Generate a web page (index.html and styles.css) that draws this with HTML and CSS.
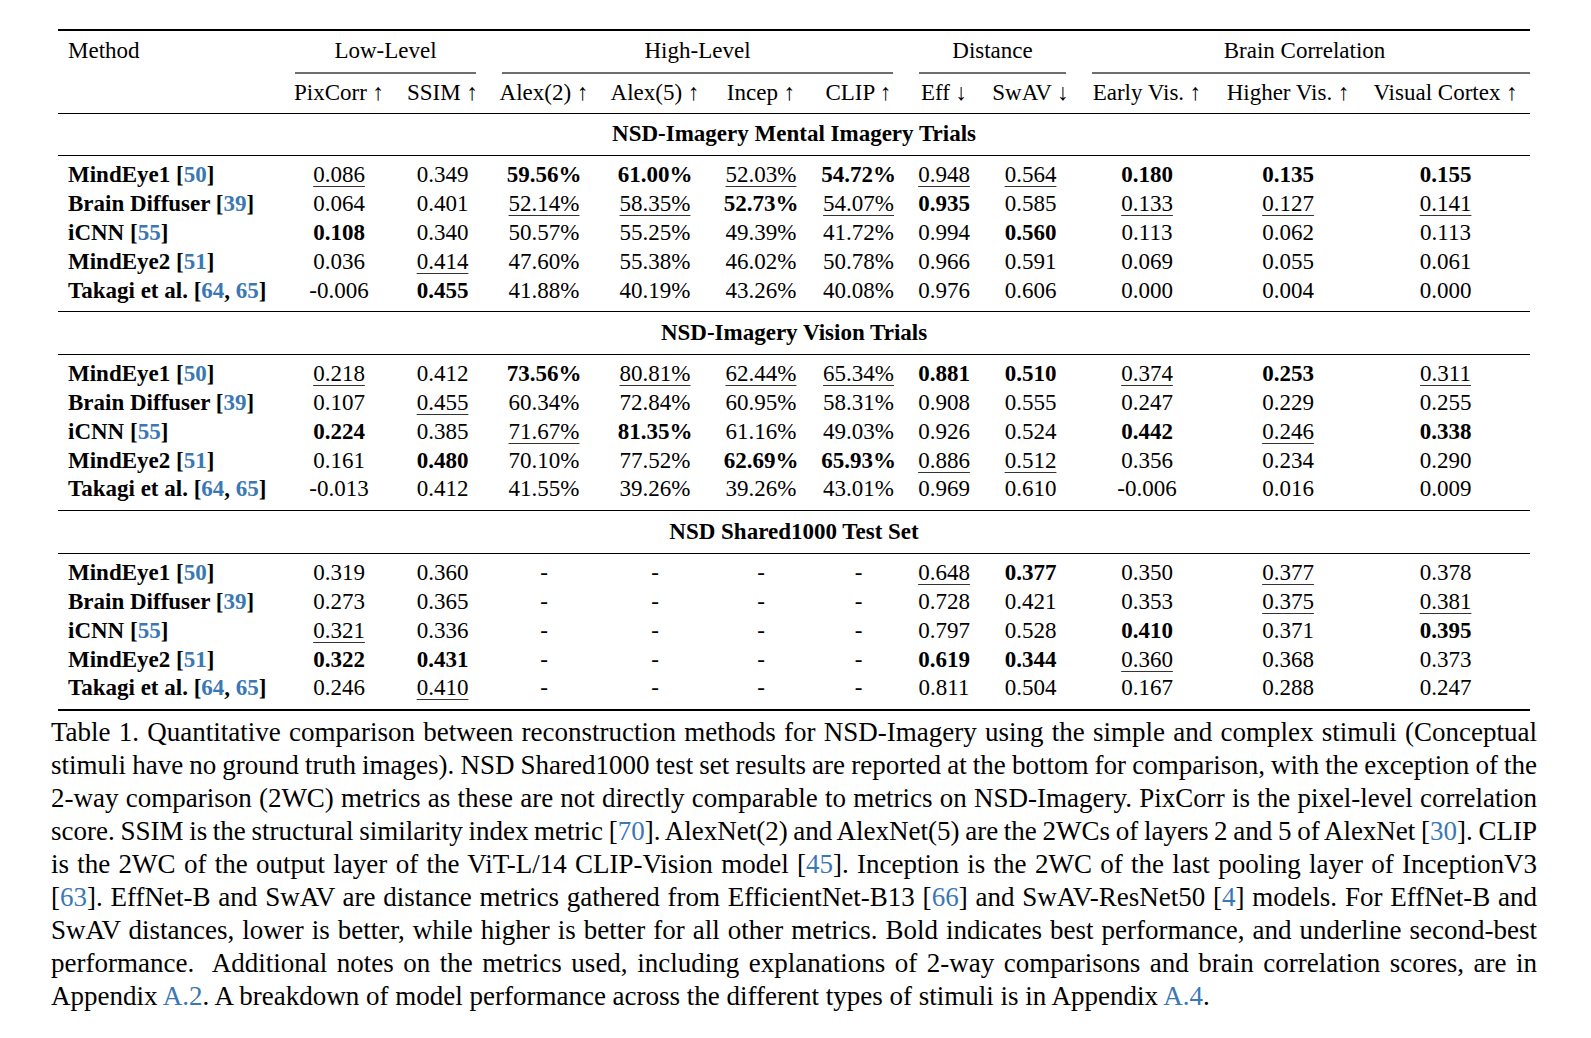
FILE: index.html
```html
<!DOCTYPE html>
<html>
<head>
<meta charset="utf-8">
<link rel="stylesheet" href="styles.css">
</head>
<body>
<div class="page">
<table class="results">
<colgroup>
<col class="c-method"><col class="c-pix"><col class="c-ssim"><col class="c-a2"><col class="c-a5"><col class="c-inc"><col class="c-clip"><col class="c-eff"><col class="c-swav"><col class="c-early"><col class="c-higher"><col class="c-vc">
</colgroup>
<thead>
<tr class="grp">
<th class="m-head">Method</th>
<th colspan="2"><div class="glabel">Low-Level</div><div class="cmid"></div></th>
<th colspan="4"><div class="glabel">High-Level</div><div class="cmid"></div></th>
<th colspan="2"><div class="glabel">Distance</div><div class="cmid"></div></th>
<th colspan="3"><div class="glabel">Brain Correlation</div><div class="cmid last"></div></th>
</tr>
<tr class="sub">
<th></th>
<th>PixCorr ↑</th><th>SSIM ↑</th><th>Alex(2) ↑</th><th>Alex(5) ↑</th><th>Incep ↑</th><th>CLIP ↑</th><th>Eff ↓</th><th>SwAV ↓</th><th>Early Vis. ↑</th><th>Higher Vis. ↑</th><th>Visual Cortex ↑</th>
</tr>
</thead>
<tbody>
<tr class="section"><td colspan="12">NSD-Imagery Mental Imagery Trials</td></tr>
<tr class="first"><td class="m">MindEye1 [<span class="cite">50</span>]</td><td><span class="ul">0.086</span></td><td>0.349</td><td class="b">59.56%</td><td class="b">61.00%</td><td><span class="ul">52.03%</span></td><td class="b">54.72%</td><td><span class="ul">0.948</span></td><td><span class="ul">0.564</span></td><td class="b">0.180</td><td class="b">0.135</td><td class="b">0.155</td></tr>
<tr><td class="m">Brain Diffuser [<span class="cite">39</span>]</td><td>0.064</td><td>0.401</td><td><span class="ul">52.14%</span></td><td><span class="ul">58.35%</span></td><td class="b">52.73%</td><td><span class="ul">54.07%</span></td><td class="b">0.935</td><td>0.585</td><td><span class="ul">0.133</span></td><td><span class="ul">0.127</span></td><td><span class="ul">0.141</span></td></tr>
<tr><td class="m">iCNN [<span class="cite">55</span>]</td><td class="b">0.108</td><td>0.340</td><td>50.57%</td><td>55.25%</td><td>49.39%</td><td>41.72%</td><td>0.994</td><td class="b">0.560</td><td>0.113</td><td>0.062</td><td>0.113</td></tr>
<tr><td class="m">MindEye2 [<span class="cite">51</span>]</td><td>0.036</td><td><span class="ul">0.414</span></td><td>47.60%</td><td>55.38%</td><td>46.02%</td><td>50.78%</td><td>0.966</td><td>0.591</td><td>0.069</td><td>0.055</td><td>0.061</td></tr>
<tr class="last"><td class="m">Takagi et al. [<span class="cite">64</span>, <span class="cite">65</span>]</td><td>-0.006</td><td class="b">0.455</td><td>41.88%</td><td>40.19%</td><td>43.26%</td><td>40.08%</td><td>0.976</td><td>0.606</td><td>0.000</td><td>0.004</td><td>0.000</td></tr>

<tr class="section"><td colspan="12">NSD-Imagery Vision Trials</td></tr>
<tr class="first"><td class="m">MindEye1 [<span class="cite">50</span>]</td><td><span class="ul">0.218</span></td><td>0.412</td><td class="b">73.56%</td><td><span class="ul">80.81%</span></td><td><span class="ul">62.44%</span></td><td><span class="ul">65.34%</span></td><td class="b">0.881</td><td class="b">0.510</td><td><span class="ul">0.374</span></td><td class="b">0.253</td><td><span class="ul">0.311</span></td></tr>
<tr><td class="m">Brain Diffuser [<span class="cite">39</span>]</td><td>0.107</td><td><span class="ul">0.455</span></td><td>60.34%</td><td>72.84%</td><td>60.95%</td><td>58.31%</td><td>0.908</td><td>0.555</td><td>0.247</td><td>0.229</td><td>0.255</td></tr>
<tr><td class="m">iCNN [<span class="cite">55</span>]</td><td class="b">0.224</td><td>0.385</td><td><span class="ul">71.67%</span></td><td class="b">81.35%</td><td>61.16%</td><td>49.03%</td><td>0.926</td><td>0.524</td><td class="b">0.442</td><td><span class="ul">0.246</span></td><td class="b">0.338</td></tr>
<tr><td class="m">MindEye2 [<span class="cite">51</span>]</td><td>0.161</td><td class="b">0.480</td><td>70.10%</td><td>77.52%</td><td class="b">62.69%</td><td class="b">65.93%</td><td><span class="ul">0.886</span></td><td><span class="ul">0.512</span></td><td>0.356</td><td>0.234</td><td>0.290</td></tr>
<tr class="last"><td class="m">Takagi et al. [<span class="cite">64</span>, <span class="cite">65</span>]</td><td>-0.013</td><td>0.412</td><td>41.55%</td><td>39.26%</td><td>39.26%</td><td>43.01%</td><td>0.969</td><td>0.610</td><td>-0.006</td><td>0.016</td><td>0.009</td></tr>

<tr class="section"><td colspan="12">NSD Shared1000 Test Set</td></tr>
<tr class="first"><td class="m">MindEye1 [<span class="cite">50</span>]</td><td>0.319</td><td>0.360</td><td>-</td><td>-</td><td>-</td><td>-</td><td><span class="ul">0.648</span></td><td class="b">0.377</td><td>0.350</td><td><span class="ul">0.377</span></td><td>0.378</td></tr>
<tr><td class="m">Brain Diffuser [<span class="cite">39</span>]</td><td>0.273</td><td>0.365</td><td>-</td><td>-</td><td>-</td><td>-</td><td>0.728</td><td>0.421</td><td>0.353</td><td><span class="ul">0.375</span></td><td><span class="ul">0.381</span></td></tr>
<tr><td class="m">iCNN [<span class="cite">55</span>]</td><td><span class="ul">0.321</span></td><td>0.336</td><td>-</td><td>-</td><td>-</td><td>-</td><td>0.797</td><td>0.528</td><td class="b">0.410</td><td>0.371</td><td class="b">0.395</td></tr>
<tr><td class="m">MindEye2 [<span class="cite">51</span>]</td><td class="b">0.322</td><td class="b">0.431</td><td>-</td><td>-</td><td>-</td><td>-</td><td class="b">0.619</td><td class="b">0.344</td><td><span class="ul">0.360</span></td><td>0.368</td><td>0.373</td></tr>
<tr class="last final"><td class="m">Takagi et al. [<span class="cite">64</span>, <span class="cite">65</span>]</td><td>0.246</td><td><span class="ul">0.410</span></td><td>-</td><td>-</td><td>-</td><td>-</td><td>0.811</td><td>0.504</td><td>0.167</td><td>0.288</td><td>0.247</td></tr>
</tbody>
</table>
<p class="caption">
<span class="line">Table 1. Quantitative comparison between reconstruction methods for NSD-Imagery using the simple and complex stimuli (Conceptual</span>
<span class="line">stimuli have no ground truth images). NSD Shared1000 test set results are reported at the bottom for comparison, with the exception of the</span>
<span class="line">2-way comparison (2WC) metrics as these are not directly comparable to metrics on NSD-Imagery. PixCorr is the pixel-level correlation</span>
<span class="line">score. SSIM is the structural similarity index metric [<span class="cite">70</span>]. AlexNet(2) and AlexNet(5) are the 2WCs of layers 2 and 5 of AlexNet [<span class="cite">30</span>]. CLIP</span>
<span class="line">is the 2WC of the output layer of the ViT-L/14 CLIP-Vision model [<span class="cite">45</span>]. Inception is the 2WC of the last pooling layer of InceptionV3</span>
<span class="line">[<span class="cite">63</span>]. EffNet-B and SwAV are distance metrics gathered from EfficientNet-B13 [<span class="cite">66</span>] and SwAV-ResNet50 [<span class="cite">4</span>] models. For EffNet-B and</span>
<span class="line">SwAV distances, lower is better, while higher is better for all other metrics. Bold indicates best performance, and underline second-best</span>
<span class="line">performance.&nbsp; Additional notes on the metrics used, including explanations of 2-way comparisons and brain correlation scores, are in</span>
<span class="line end">Appendix <span class="cite">A.2</span>. A breakdown of model performance across the different types of stimuli is in Appendix <span class="cite">A.4</span>.</span>
</p>
</div>
</body>
</html>
```

FILE: styles.css
```css
body {
  margin: 0;
  background: #ffffff;
  color: #000000;
  font-family: "Liberation Serif", "Times New Roman", serif;
}

.page {
  padding: 29px 0 0 51px;
}

.results {
  border-collapse: collapse;
  table-layout: fixed;
  width: 1472px;
  margin-left: 7px;
  font-size: 23px;
}

.c-method { width: 224px; }
.c-pix { width: 114px; }
.c-ssim { width: 93px; }
.c-a2 { width: 110px; }
.c-a5 { width: 112px; }
.c-inc { width: 100px; }
.c-clip { width: 95px; }
.c-eff { width: 76px; }
.c-swav { width: 97px; }
.c-early { width: 136px; }
.c-higher { width: 146px; }
.c-vc { width: 169px; }

.results th {
  font-weight: normal;
  padding: 0;
  text-align: center;
  white-space: nowrap;
}

.results td {
  padding: 0;
  text-align: center;
  white-space: nowrap;
  line-height: 28.9px;
}

.grp {
  border-top: 2px solid #000;
}

.grp th {
  vertical-align: top;
  padding-top: 7px;
}

.grp th.m-head {
  text-align: left;
  padding-left: 10px;
}

.glabel {
  line-height: 26px;
  height: 26px;
}

.cmid {
  height: 1.5px;
  background: #6e6e6e;
  margin: 8px 13px 0;
}

.cmid.last {
  margin-right: 0;
}

.sub th {
  line-height: 26px;
  padding: 6.5px 0 6.5px;
}

.sub {
  border-bottom: 1px solid #000;
}

.section td {
  font-weight: bold;
  padding: 6.5px 0 6px;
  border-bottom: 1px solid #000;
}

.first td {
  padding-top: 5px;
}

.last td {
  padding-bottom: 6px;
  border-bottom: 1px solid #000;
}

.final td {
  border-bottom: 2.5px solid #000;
}

.results td.m {
  text-align: left;
  padding-left: 10px;
  font-weight: bold;
}

.b {
  font-weight: bold;
}

.ul {
  text-decoration: underline;
  text-decoration-thickness: 1px;
  text-underline-offset: 4px;
  text-decoration-color: #333;
}

.cite {
  color: #3a78b4;
}

.caption {
  width: 1486px;
  margin: 5px 0 0;
  font-size: 27px;
  line-height: 32.9px;
}

.caption .line {
  display: block;
  text-align: justify;
  text-align-last: justify;
  word-spacing: -4px;
}

.caption .line.end {
  text-align: left;
  text-align-last: left;
  word-spacing: 0;
}
```
